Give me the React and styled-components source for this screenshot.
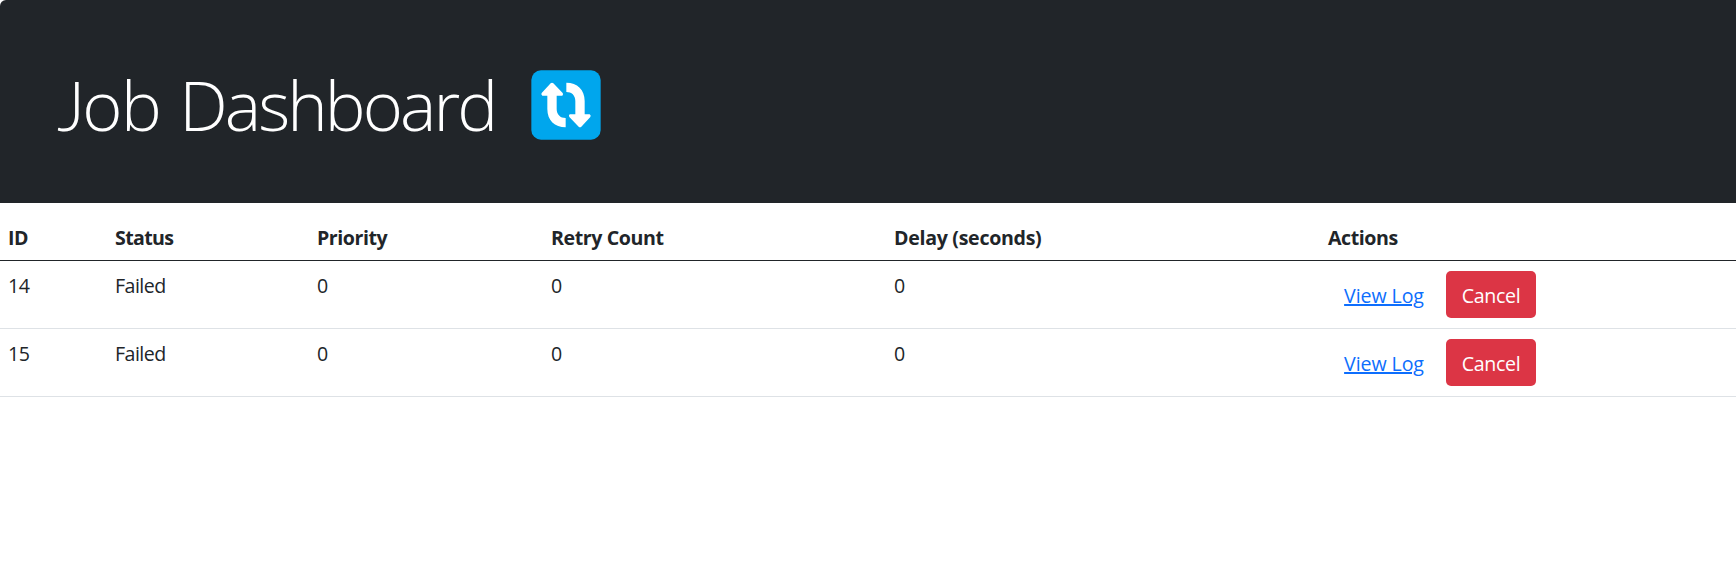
import React from "react";
import styled, { createGlobalStyle } from "styled-components";

const GlobalStyle = createGlobalStyle`
  *, *::before, *::after { box-sizing: border-box; }
  body {
    margin: 0;
    background: #fff;
    color: #212529;
    font-family: "Segoe UI", "Open Sans", "Noto Sans", sans-serif;
    font-size: 19.6px;
    line-height: 30px;
    overflow: hidden;
  }
`;

const Hero = styled.header`
  display: flex;
  align-items: center;
  justify-content: flex-start;
  height: 203px;
  padding: 60px 60px 53px 57px;
  border-top-left-radius: 6px;
  background: #212529;
  color: #fff;
`;

const Title = styled.h1`
  width: 474px;
  margin: 0;
  font-size: 68.6px;
  font-weight: 300;
  line-height: 84px;
  letter-spacing: -2.9px;
  word-spacing: 4px;
  white-space: nowrap;
`;

const Initial = styled.span`
  font-family: Lato, sans-serif;
  font-size: 68px;
  line-height: 1;
  letter-spacing: -3px;
`;

const ShortWord = styled.span`
  letter-spacing: -1.5px;
`;

const RefreshIcon = styled.svg`
  display: block;
  flex: none;
  width: 70px;
  height: 70px;
`;

const Table = styled.table`
  width: 100%;
  table-layout: fixed;
  border-collapse: separate;
  border-spacing: 0;
`;

const Col = styled.col`
  width: ${(p) => p.$width};
`;

const HeadCell = styled.th`
  padding: 20px 10px 7px 8px;
  border-bottom: 1px solid #212529;
  text-align: left;
  font-weight: 700;
  letter-spacing: ${(p) => p.$tracking || "-0.45px"};
  white-space: nowrap;
`;

const Cell = styled.td`
  padding: 10px 10px 10px 8px;
  border-bottom: 1px solid #dee2e6;
  letter-spacing: -0.55px;
  vertical-align: top;
`;

const Actions = styled.div`
  display: flex;
  gap: 6px;
`;

const Button = styled.button`
  height: 47px;
  width: ${(p) => (p.$danger ? "90px" : "112px")};
  padding: 2px 0 0;
  border: 0;
  border-radius: 5px;
  background: ${(p) => (p.$danger ? "#dc3545" : "transparent")};
  color: ${(p) => (p.$danger ? "#fff" : "#0d6efd")};
  font: inherit;
  letter-spacing: ${(p) => (p.$danger ? "-0.35px" : "-0.1px")};
  text-decoration: ${(p) => (p.$danger ? "none" : "underline")};
  text-decoration-thickness: 2px;
  text-underline-offset: 1px;
  cursor: pointer;
`;

const columns = [
  { label: "ID", width: "107px" },
  { label: "Status", width: "202px", tracking: "-0.65px" },
  { label: "Priority", width: "234px" },
  { label: "Retry Count", width: "343px", tracking: "-0.4px" },
  { label: "Delay (seconds)", width: "434px", tracking: "-0.3px" },
  { label: "Actions", width: "auto" },
];

const jobs = [
  { id: 14, status: "Failed", priority: 0, retries: 0, delay: 0 },
  { id: 15, status: "Failed", priority: 0, retries: 0, delay: 0 },
];

const ARROW =
  "M92 71Q96 67 100 71L128 100Q131 104 127 108H110V148C110 165 121 175 137 175V203C104 203 82 182 82 148V108H67Q62 104 65 100Z";

function VerticalArrows() {
  return (
    <RefreshIcon viewBox="33 31 210 210" aria-hidden="true">
      <rect x="34" y="32" width="208" height="208" rx="29" fill="#00a6ed" />
      <path d={ARROW} fill="#fff" />
      <path d={ARROW} fill="#fff" transform="rotate(180 138 136)" />
    </RefreshIcon>
  );
}

export default function App() {
  return (
    <>
      <GlobalStyle />
      <Hero>
        <Title>
          <ShortWord>
            <Initial>J</Initial>ob
          </ShortWord>{" "}
          Dashboard
        </Title>
        <VerticalArrows />
      </Hero>
      <Table>
        <colgroup>
          {columns.map((c) => (
            <Col key={c.label} $width={c.width} />
          ))}
        </colgroup>
        <thead>
          <tr>
            {columns.map((c) => (
              <HeadCell key={c.label} $tracking={c.tracking}>
                {c.label}
              </HeadCell>
            ))}
          </tr>
        </thead>
        <tbody>
          {jobs.map((job) => (
            <tr key={job.id}>
              <Cell>{job.id}</Cell>
              <Cell>{job.status}</Cell>
              <Cell>{job.priority}</Cell>
              <Cell>{job.retries}</Cell>
              <Cell>{job.delay}</Cell>
              <Cell>
                <Actions>
                  <Button>View Log</Button>
                  <Button $danger>Cancel</Button>
                </Actions>
              </Cell>
            </tr>
          ))}
        </tbody>
      </Table>
    </>
  );
}
